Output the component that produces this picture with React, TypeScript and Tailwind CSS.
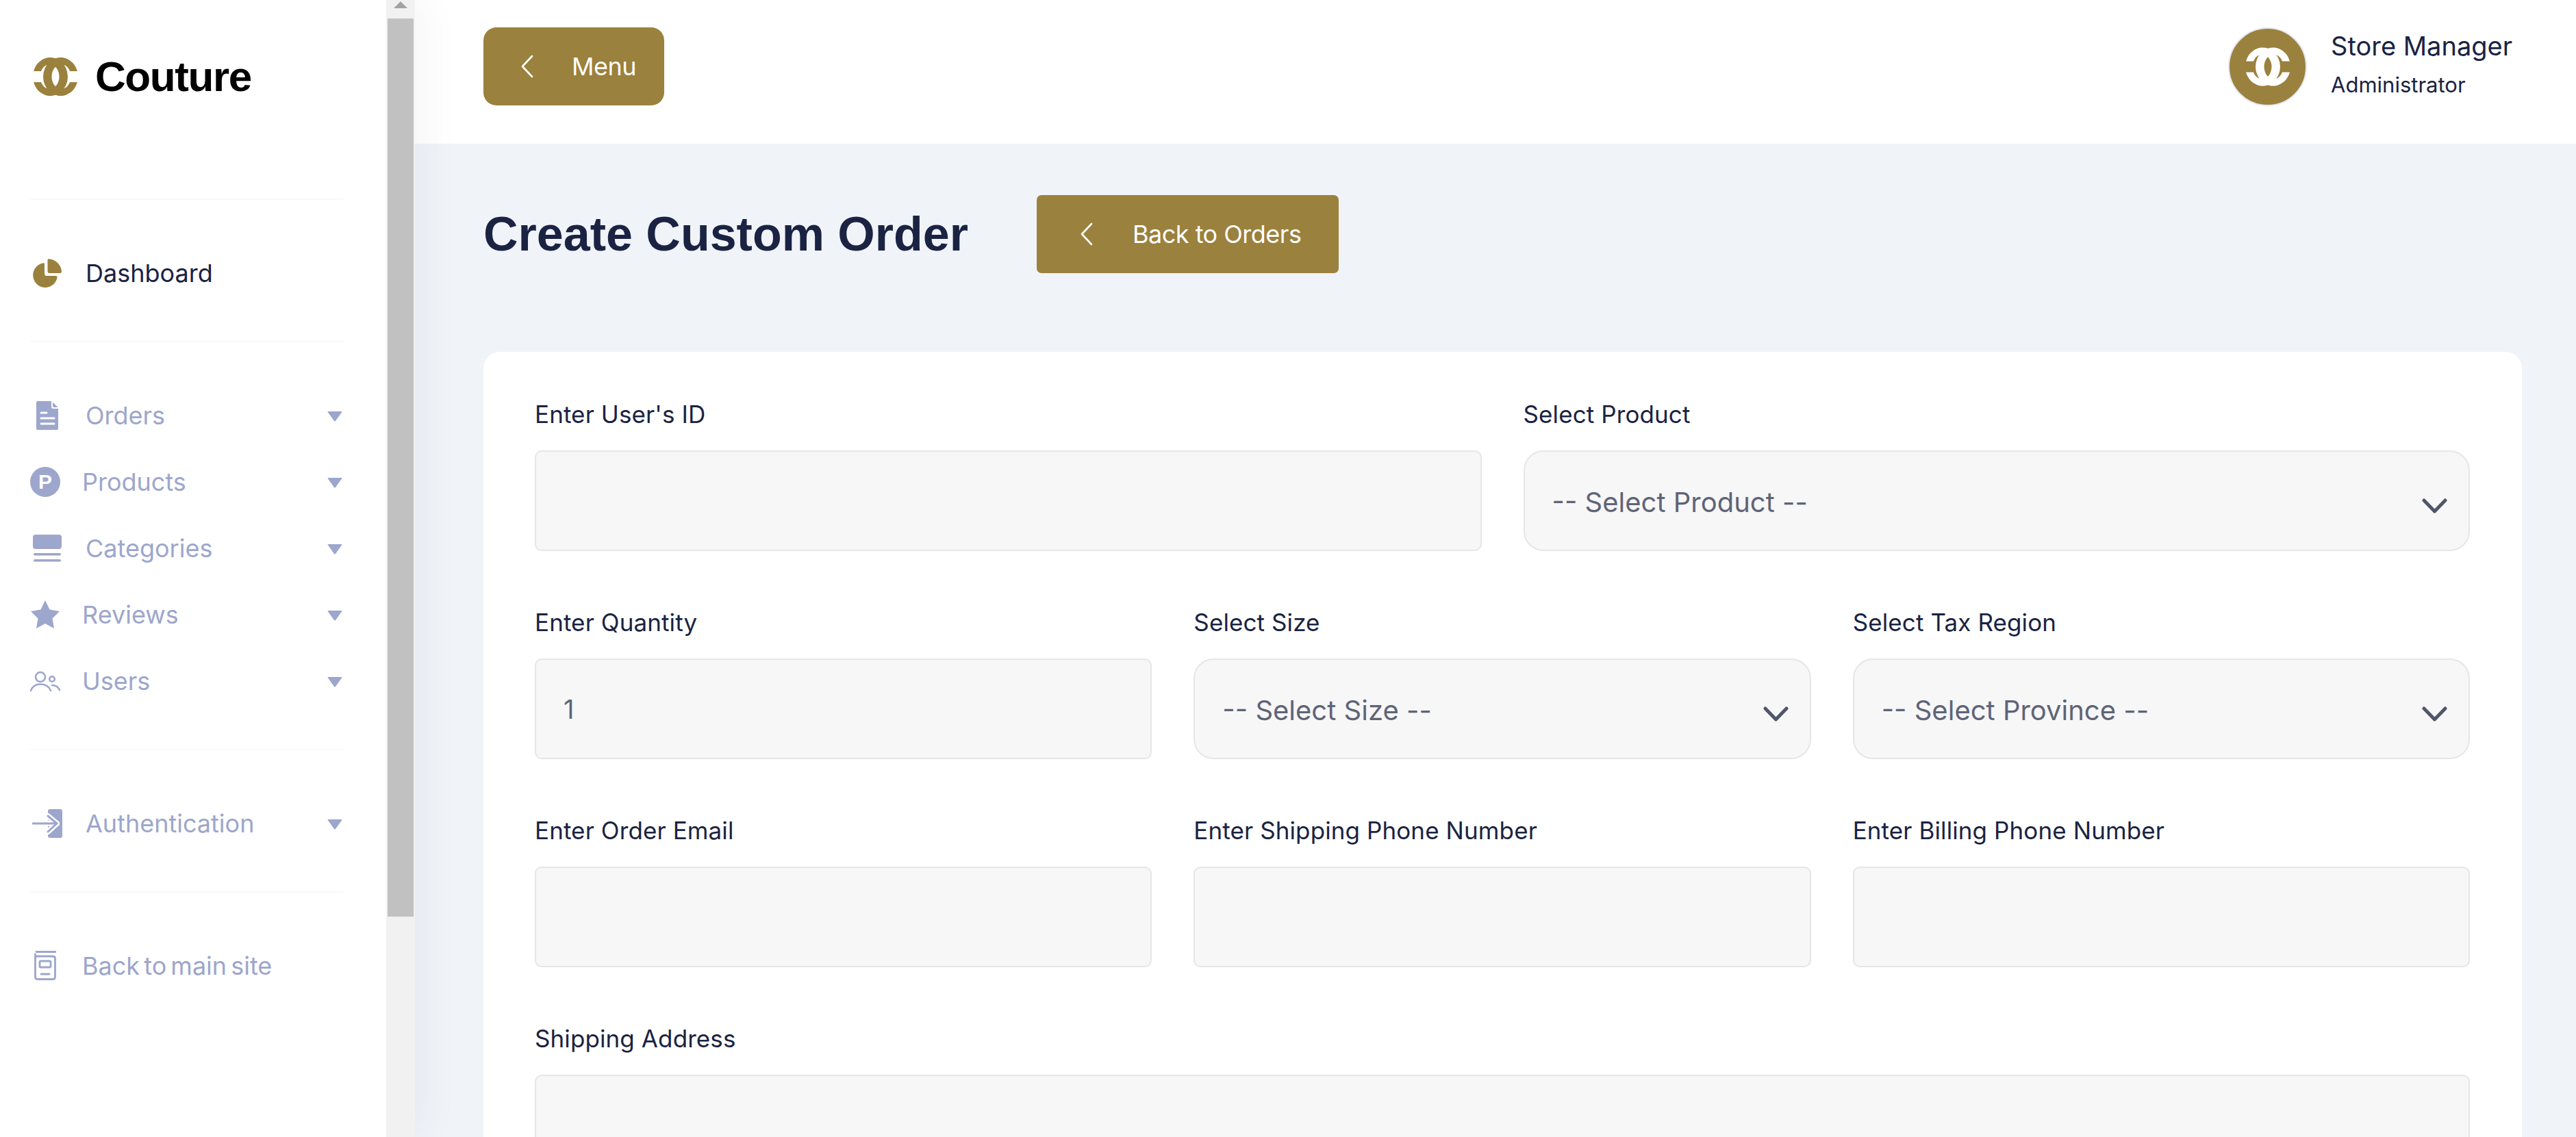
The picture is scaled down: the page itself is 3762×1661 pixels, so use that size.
import React from "react";

const sans = "font-['Inter','Noto_Sans',sans-serif]";

const CoutureMark: React.FC<{ className: string }> = ({ className }) => (
  <svg viewBox="0 0 66 56" className={className} fill="currentColor">
    <path d="M1.06 20A25.5 28 0 1 1 1.06 36L11.96 36A14 18 0 1 0 11.96 20Z" />
    <path d="M64.94 20A25.5 28 0 1 0 64.94 36L54.04 36A14 18 0 1 1 54.04 20Z" />
  </svg>
);

const PieIcon = () => (
  <svg viewBox="0 0 42 42" className="ml-[4px] mr-[35px] h-[42px] w-[42px] text-[#9a813d]" fill="currentColor">
    <path d="M17 7.5V21.5Q17 25 20.5 25H33.5Q36 25 35.5 27.5A17.8 18 0 1 1 14 6.5Q17 5.5 17 7.5Z" />
    <path d="M21.5 2Q21.5 0 23.5 0.3A20 20 0 0 1 42 18.5Q42 21 40 21H24Q21.5 21 21.5 18.5Z" />
  </svg>
);

const DocIcon = () => (
  <svg viewBox="0 0 32 42" className="ml-[9px] mr-[40px] h-[42px] w-[32px]" fill="currentColor">
    <path d="M2 0H22V8Q22 11 25 11H32V40Q32 42 30 42H2Q0 42 0 40V2Q0 0 2 0Z" />
    <path d="M24 1.5L31.5 9H26Q24 9 24 7Z" />
    <g stroke="#fff" strokeWidth="3" strokeLinecap="round">
      <path d="M7 17H15M7 25H26M7 33H26" />
    </g>
  </svg>
);

const CategoriesIcon = () => (
  <svg viewBox="0 0 42 40" className="ml-[4px] mr-[35px] h-[40px] w-[42px]" fill="currentColor">
    <rect width="42" height="21" rx="4" />
    <rect x="1" y="27" width="40" height="3.5" rx="1.7" />
    <rect x="1" y="36" width="40" height="3.5" rx="1.7" />
  </svg>
);

const StarIcon = () => (
  <svg viewBox="0 0 42 41" className="ml-[1px] mr-[33px] h-[41px] w-[42px]" fill="currentColor">
    <path d="M21 0L27.5 13.5L42 16L31.5 26.5L34 41L21 34L8 41L10.5 26.5L0 16L14.5 13.5Z" />
  </svg>
);

const UsersIcon = () => (
  <svg viewBox="0 0 44 30" className="mr-[32px] h-[30px] w-[44px]" fill="none" stroke="currentColor" strokeWidth="2.6" strokeLinecap="round">
    <circle cx="15" cy="9" r="7" />
    <circle cx="32" cy="12" r="3.8" />
    <path d="M1 29C4 21 10 19.5 15 19.5C20 19.5 27 21 30 29" />
    <path d="M32 21C37 21 41 23.5 43 28" />
  </svg>
);

const AuthIcon = () => (
  <svg viewBox="0 0 44 42" className="ml-[3px] mr-[34px] h-[42px] w-[44px]" fill="currentColor">
    <rect x="23" width="21" height="42" rx="3" />
    <g fill="none" stroke="#fff" strokeWidth="8" strokeLinecap="round" strokeLinejoin="round">
      <path d="M24 21H36" />
      <path d="M23 10L36 21L23 33" />
    </g>
    <g fill="none" stroke="currentColor" strokeWidth="3" strokeLinecap="round" strokeLinejoin="round">
      <path d="M1 21H36" />
      <path d="M23 10L36 21L23 33" />
    </g>
  </svg>
);

const SiteIcon = () => (
  <svg viewBox="0 0 32 43" className="ml-[6px] mr-[38px] h-[43px] w-[32px]" fill="none" stroke="currentColor" strokeWidth="2.8" strokeLinecap="round">
    <path d="M3 1.5H31" />
    <path d="M1.5 8V38Q1.5 41.5 5 41.5H27Q30.5 41.5 30.5 38V11Q30.5 8 27 8H1.5V5" />
    <rect x="8" y="15" width="16" height="9" rx="1.5" />
    <path d="M10 34H22" />
  </svg>
);

const ProductIcon = () => (
  <span className="mr-[32px] flex h-[44px] w-[44px] items-center justify-center rounded-full bg-[#9da6cc] font-['Liberation_Sans',sans-serif] text-[30px] font-bold text-white">
    P
  </span>
);

const Caret = () => (
  <svg viewBox="0 0 22 15" className="h-[15px] w-[22px]" fill="currentColor">
    <path d="M1 0H21Q22 0 21.3 1L12 14Q11 15 10 14L0.7 1Q0 0 1 0Z" />
  </svg>
);

const Chevron = () => (
  <svg viewBox="0 0 20 34" className="h-[34px] w-[20px]" fill="none" stroke="#fff" strokeWidth="2.6" strokeLinecap="round" strokeLinejoin="round">
    <path d="M17 2L3 17L17 32" />
  </svg>
);

const NavItem: React.FC<{ icon: React.ReactNode; label: string; caret?: boolean; active?: boolean }> = ({ icon, label, caret, active }) => (
  <a className={`flex h-[97px] items-center justify-between ${active ? "text-[#1a2342]" : "text-[#9da6cc]"}`}>
    <span className="flex items-center">
      {icon}
      <span className="text-[36px] leading-none [word-spacing:-4px]">{label}</span>
    </span>
    {caret && (
      <span className="mr-[2px] mt-[4px] text-[#9da6cc]">
        <Caret />
      </span>
    )}
  </a>
);

const Section: React.FC<{ children: React.ReactNode }> = ({ children }) => (
  <div className="border-b-2 border-[#f8f9fa] pb-[51px] pt-[58px]">{children}</div>
);

const Sidebar = () => (
  <aside className="relative z-10 flex h-full w-[606px] shrink-0 bg-white shadow-[0_0_60px_rgba(82,63,105,0.08)]">
    <div className="w-[564px] pl-[44px] pr-[62px]">
      <div className="flex h-[292px] items-start border-b-2 border-[#f8f9fa] pl-[4px] pt-[84px]">
        <CoutureMark className="h-[56px] w-[66px] text-[#9a813d]" />
        <span className="ml-[25px] font-['Liberation_Sans',sans-serif] text-[62px] font-bold leading-[56px] tracking-[-1.4px] text-black">Couture</span>
      </div>
      <Section>
        <NavItem icon={<PieIcon />} label="Dashboard" active />
      </Section>
      <Section>
        <NavItem icon={<DocIcon />} label="Orders" caret />
        <NavItem icon={<ProductIcon />} label="Products" caret />
        <NavItem icon={<CategoriesIcon />} label="Categories" caret />
        <NavItem icon={<StarIcon />} label="Reviews" caret />
        <NavItem icon={<UsersIcon />} label="Users" caret />
      </Section>
      <Section>
        <NavItem icon={<AuthIcon />} label="Authentication" caret />
      </Section>
      <div className="pt-[58px]">
        <NavItem icon={<SiteIcon />} label="Back to main site" />
      </div>
    </div>
    <div className="flex w-[42px] flex-col bg-[#f1f1f1] px-[2px]">
      <div className="flex h-[27px] items-start justify-center pt-[2px]">
        <div className="h-0 w-0 border-x-[10px] border-b-[10px] border-x-transparent border-b-[#a3a3a3]" />
      </div>
      <div className="h-[1312px] bg-[#c1c1c1]" />
    </div>
  </aside>
);

const TopBar = () => (
  <header className="flex h-[210px] shrink-0 items-start justify-between bg-white pl-[100px] pr-[93px] pt-[40px]">
    <button className="flex h-[114px] w-[264px] items-center rounded-[19px] bg-[#9a813d] pl-[54px] text-[36px] tracking-[-0.5px] text-white">
      <Chevron />
      <span className="ml-[55px]">Menu</span>
    </button>
    <div className="flex items-start">
      <div className="flex h-[115px] w-[115px] items-center justify-center rounded-full border-2 border-[#e4e6ef] bg-[#9a813d] text-white">
        <CoutureMark className="h-[57px] w-[66px]" />
      </div>
      <div className="ml-[35px] flex flex-col">
        <span className="text-[38px] leading-[54px] text-[#1a2342]">Store Manager</span>
        <span className="mt-[8px] text-[31px] leading-[44px] text-[#1a2342]">Administrator</span>
      </div>
    </div>
  </header>
);

const Label: React.FC<{ children: React.ReactNode }> = ({ children }) => (
  <label className="mb-[31px] block h-[40px] text-[35px] leading-[37px] tracking-[0.1px] text-[#1a2342]">{children}</label>
);

const TextField: React.FC<{ label: string; value?: string }> = ({ label, value }) => (
  <div>
    <Label>{label}</Label>
    <input
      readOnly
      value={value ?? ""}
      className="block h-[147px] w-full rounded-[10px] border-2 border-[#e6e6e6] bg-[#f7f7f7] px-[40px] text-[38px] text-[#5f6477] outline-none"
    />
  </div>
);

const SelectField: React.FC<{ label: string; placeholder: string }> = ({ label, placeholder }) => (
  <div>
    <Label>{label}</Label>
    <div className="relative">
      <select className="block h-[147px] w-full appearance-none rounded-[29px] border-2 border-[#e6e6e6] bg-[#f7f7f7] px-[40px] pt-[4px] text-[40px] text-[#5f6477] outline-none">
        <option>{placeholder}</option>
      </select>
      <svg viewBox="0 0 37 22" className="absolute right-[33px] top-[70px] h-[22px] w-[37px]" fill="none" stroke="#4f566b" strokeWidth="5" strokeLinecap="round" strokeLinejoin="round">
        <path d="M3 3L18.5 19L34 3" />
      </svg>
    </div>
  </div>
);

export default function App() {
  return (
    <div className={`flex h-[1661px] w-[3762px] overflow-hidden bg-[#f0f3f8] ${sans}`}>
      <Sidebar />
      <main className="flex min-w-0 flex-1 flex-col">
        <TopBar />
        <div className="pl-[100px] pr-[79px]">
          <div className="flex h-[304px] items-start pt-[75px]">
            <h1 className="font-['Liberation_Sans',sans-serif] text-[70px] font-bold leading-[114px] text-[#1a2342]">Create Custom Order</h1>
            <button className="ml-[100px] flex h-[114px] w-[441px] items-center rounded-[7px] bg-[#9a813d] pl-[63px] text-[36px] tracking-[-0.5px] text-white">
              <Chevron />
              <span className="ml-[57px]">Back to Orders</span>
            </button>
          </div>
          <div className="rounded-[24px] bg-white pb-[80px] pl-[75px] pr-[76px] pt-[73px]">
            <div className="grid grid-cols-2 gap-[61px]">
              <TextField label="Enter User's ID" />
              <SelectField label="Select Product" placeholder="-- Select Product --" />
            </div>
            <div className="mt-[86px] grid grid-cols-3 gap-[61px]">
              <TextField label="Enter Quantity" value="1" />
              <SelectField label="Select Size" placeholder="-- Select Size --" />
              <SelectField label="Select Tax Region" placeholder="-- Select Province --" />
            </div>
            <div className="mt-[86px] grid grid-cols-3 gap-[61px]">
              <TextField label="Enter Order Email" />
              <TextField label="Enter Shipping Phone Number" />
              <TextField label="Enter Billing Phone Number" />
            </div>
            <div className="mt-[86px]">
              <TextField label="Shipping Address" />
            </div>
          </div>
        </div>
      </main>
    </div>
  );
}
